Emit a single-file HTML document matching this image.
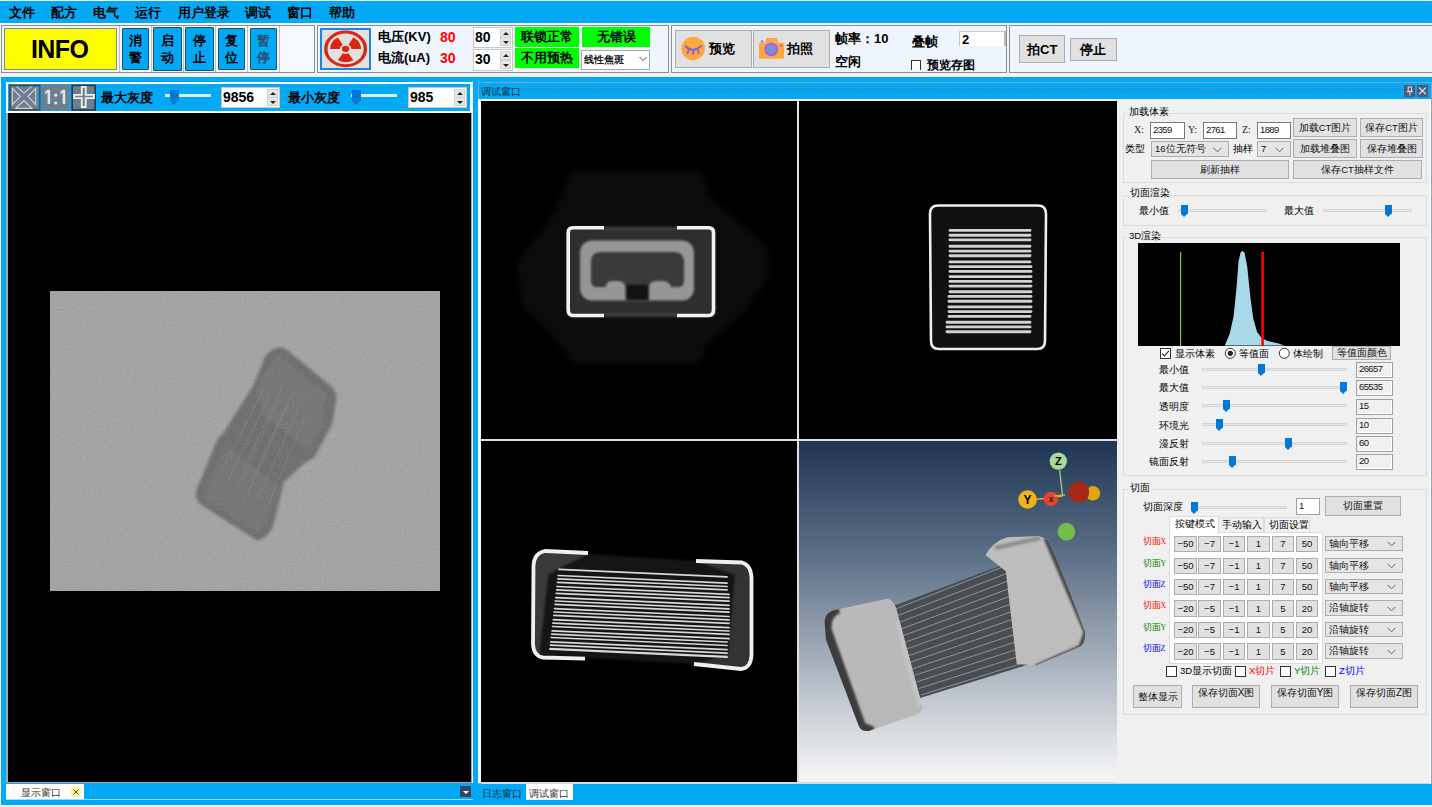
<!DOCTYPE html>
<html><head><meta charset="utf-8">
<style>
*{box-sizing:border-box;margin:0;padding:0}
html,body{width:1432px;height:807px;overflow:hidden;background:#eef5fc;font-family:"Liberation Sans",sans-serif;color:#000}
.a{position:absolute}
.t{position:absolute;white-space:nowrap;line-height:1}
.blue{background:#03a9f4}
.grp{position:absolute;border:1px solid #8c8c8c;background:#eef5fc}
.wbtn{position:absolute;background:#e1e1e1;border:1px solid #adadad}
.mi{position:absolute;top:6px;font-size:13px;font-weight:bold;line-height:14px}
.tb{position:absolute;background:#03a9f4;border:1px solid #1d4f6e;border-radius:1px;font-size:13px;font-weight:bold;display:flex;flex-direction:column;align-items:center;justify-content:center;line-height:17px}
.spin{position:absolute;background:#fff;border:1px solid #c8c8c8}
.spin b{position:absolute;left:1px;top:2px;font-size:14px;line-height:14px}
.spin i{position:absolute;right:1px;width:11px;background:#e6e6e6;border:1px solid #d0d0d0}
.spin i.up{top:1px;height:9px}
.spin i.dn{bottom:1px;height:9px}
.spin i:after{content:"";position:absolute;left:2px;border-left:3px solid transparent;border-right:3px solid transparent}
.spin i.up:after{top:2px;border-bottom:3px solid #222}
.spin i.dn:after{top:3px;border-top:3px solid #222}
.grn{position:absolute;background:#00ff00;font-size:13px;font-weight:bold;line-height:20px;text-align:center}
.sl{position:absolute;height:3px;background:#e6e6e6}
.th{position:absolute;width:9px;height:11px;background:#0078d7}
.th:after{content:"";position:absolute;left:0;top:11px;border-left:4.5px solid transparent;border-right:4.5px solid transparent;border-top:4px solid #0078d7}
.rb{position:absolute;background:#e1e1e1;border:1px solid #adadad;display:flex;justify-content:center;line-height:1;white-space:nowrap;color:#111}
.ri{position:absolute;background:#fff;border:1px solid #7a7a7a;font-size:9.5px;letter-spacing:-0.6px;padding-left:2px;white-space:nowrap;color:#111}
.rc{position:absolute;background:#e5e5e5;border:1px solid #acacac;font-size:9.5px;padding-left:3px;white-space:nowrap;color:#111}
.th2{position:absolute;width:7px;height:9px;background:#0078d7}
.th2:after{content:"";position:absolute;left:0;top:9px;border-left:3.5px solid transparent;border-right:3.5px solid transparent;border-top:3px solid #0078d7}
</style></head><body>
<!-- menu bar -->
<div class="a blue" style="left:0;top:1px;width:1432px;height:22px"></div>
<div class="mi" style="left:9px">文件</div>
<div class="mi" style="left:51px">配方</div>
<div class="mi" style="left:93px">电气</div>
<div class="mi" style="left:135px">运行</div>
<div class="mi" style="left:178px">用户登录</div>
<div class="mi" style="left:245px">调试</div>
<div class="mi" style="left:287px">窗口</div>
<div class="mi" style="left:329px">帮助</div>

<!-- toolbar groups -->
<div class="grp" style="left:1px;top:25px;width:314px;height:48px"></div>
<div class="grp" style="left:317px;top:25px;width:352px;height:48px"></div>
<div class="grp" style="left:671px;top:25px;width:336px;height:48px"></div>
<div class="grp" style="left:1009px;top:25px;width:430px;height:48px"></div>


<!-- group1 content -->
<div class="a" style="left:4px;top:28px;width:113px;height:42px;background:#ffff00;border:1px solid #85859a"></div>
<div class="t" style="left:31px;top:37px;font-size:25px;font-weight:bold;letter-spacing:-0.6px">INFO</div>
<div class="a" style="left:119px;top:26px;width:1px;height:46px;background:#c0c0c0"></div>
<div class="a" style="left:120px;top:26px;width:194px;height:46px;background:#f6f9fc"></div>
<div class="a" style="left:151px;top:26px;width:1px;height:46px;background:#c0c0c0"></div>
<div class="a" style="left:183px;top:26px;width:1px;height:46px;background:#c0c0c0"></div>
<div class="a" style="left:215px;top:26px;width:1px;height:46px;background:#c0c0c0"></div>
<div class="a" style="left:247px;top:26px;width:1px;height:46px;background:#c0c0c0"></div>
<div class="a" style="left:279px;top:26px;width:1px;height:46px;background:#c0c0c0"></div>
<div class="tb" style="left:122px;top:28px;width:27px;height:42px"><span>消</span><span>警</span></div>
<div class="tb" style="left:153px;top:27px;width:29px;height:44px"><span>启</span><span>动</span></div>
<div class="tb" style="left:185px;top:27px;width:29px;height:44px"><span>停</span><span>止</span></div>
<div class="tb" style="left:218px;top:28px;width:27px;height:42px"><span>复</span><span>位</span></div>
<div class="tb" style="left:250px;top:28px;width:27px;height:42px;color:#2a4a6a"><span>暂</span><span>停</span></div>


<!-- group2 content -->
<div class="a" style="left:320px;top:28px;width:51px;height:42px;background:#e1e1e1;border:2px solid #1e84dc"></div>
<svg class="a" style="left:320px;top:28px" width="51" height="42" viewBox="320 28 51 42">
 <g transform="translate(345.6 48.9) scale(1 0.851)">
  <circle r="19.8" fill="none" stroke="#dc2512" stroke-width="3.4"/>
  <circle r="3.6" fill="#dc2512"/>
  <path fill="#dc2512" d="M-15.5 0 A15.5 15.5 0 0 1 -7.75 -13.42 L-2.9 -5.02 A5.8 5.8 0 0 0 -5.8 0 Z"/>
  <path fill="#dc2512" d="M15.5 0 A15.5 15.5 0 0 0 7.75 -13.42 L2.9 -5.02 A5.8 5.8 0 0 1 5.8 0 Z"/>
  <path fill="#dc2512" d="M-7.75 13.42 A15.5 15.5 0 0 0 7.75 13.42 L2.9 5.02 A5.8 5.8 0 0 1 -2.9 5.02 Z"/>
 </g>
</svg>
<div class="t" style="left:378px;top:30px;font-size:13px;font-weight:bold;line-height:14px">电压(KV)</div>
<div class="t" style="left:378px;top:51px;font-size:13px;font-weight:bold;line-height:14px">电流(uA)</div>
<div class="t" style="left:440px;top:30px;font-size:14px;font-weight:bold;color:#ff0000;line-height:14px">80</div>
<div class="t" style="left:440px;top:51px;font-size:14px;font-weight:bold;color:#ff0000;line-height:14px">30</div>
<div class="spin" style="left:473px;top:27px;width:40px;height:21px"><b>80</b><i class="up"></i><i class="dn"></i></div>
<div class="spin" style="left:473px;top:49px;width:40px;height:22px"><b>30</b><i class="up"></i><i class="dn"></i></div>
<div class="grn" style="left:515px;top:27px;width:64px;height:20px">联锁正常</div>
<div class="grn" style="left:582px;top:27px;width:68px;height:20px">无错误</div>
<div class="grn" style="left:515px;top:48px;width:64px;height:20px">不用预热</div>
<div class="a" style="left:581px;top:50px;width:69px;height:20px;background:#fff;border:1px solid #a8a8a8"></div>
<div class="t" style="left:584px;top:54px;font-size:10px;font-weight:bold;line-height:11px;color:#222">线性焦斑</div>
<svg class="a" style="left:638px;top:55px" width="10" height="8"><path d="M1.5 2 L5 5.5 L8.5 2" fill="none" stroke="#555" stroke-width="1"/></svg>

<!-- group3 content -->
<div class="wbtn" style="left:675px;top:30px;width:77px;height:38px"></div>
<svg class="a" style="left:680px;top:36px" width="26" height="26" viewBox="680 36 26 26">
 <circle cx="693.2" cy="48.5" r="11.8" fill="#ffa63f"/>
 <path d="M685.5 46.3 Q693.2 53.5 701.2 46.1" fill="none" stroke="#7b68d0" stroke-width="2" stroke-linecap="round"/>
 <path d="M688.6 50.2 L687.6 53 M693.2 50.8 L693.2 54.2 M697.8 50.2 L698.8 53" stroke="#7b68d0" stroke-width="1.8" stroke-linecap="round"/>
</svg>
<div class="t" style="left:709px;top:42px;font-size:13px;font-weight:bold;line-height:14px">预览</div>
<div class="wbtn" style="left:753px;top:30px;width:77px;height:38px"></div>
<svg class="a" style="left:756px;top:36px" width="30" height="26" viewBox="756 36 30 26">
 <path d="M765.1 42.7 L766.3 38.1 L777 38.1 L778.2 42.7 Z" fill="#ffa63f"/>
 <rect x="759" y="42.7" width="25" height="16" rx="1.2" fill="#ffa63f"/>
 <circle cx="771.2" cy="49.4" r="7" fill="#9a6ae0"/>
 <circle cx="771.2" cy="49.4" r="4.8" fill="#7e8ed0"/>
 <circle cx="762.1" cy="41.5" r="1.2" fill="#9a6ae0"/>
 <circle cx="780.9" cy="45.7" r="1.2" fill="#9a6ae0"/>
</svg>
<div class="t" style="left:787px;top:42px;font-size:13px;font-weight:bold;line-height:14px">拍照</div>
<div class="t" style="left:835px;top:32px;font-size:13px;font-weight:bold;line-height:14px">帧率：10</div>
<div class="t" style="left:835px;top:55px;font-size:13px;font-weight:bold;line-height:14px">空闲</div>
<div class="t" style="left:912px;top:35px;font-size:13px;font-weight:bold;line-height:14px">叠帧</div>
<div class="a" style="left:959px;top:31px;width:47px;height:15px;background:#fff;border-top:1px solid #c8c8c8;border-left:1px solid #c8c8c8"></div>
<div class="a" style="left:1004px;top:31px;width:2px;height:15px;background:#b8b8b8"></div>
<div class="t" style="left:962px;top:33px;font-size:13px;font-weight:bold;line-height:14px">2</div>
<div class="a" style="left:911px;top:60px;width:10px;height:10px;background:#fff;border:1px solid #333;border-bottom:none"></div>
<div class="t" style="left:927px;top:59px;font-size:12px;font-weight:bold;line-height:13px">预览存图</div>

<!-- group4 content -->
<div class="wbtn" style="left:1019px;top:35px;width:46px;height:28px"></div>
<div class="t" style="left:1027px;top:43px;font-size:13px;font-weight:bold;line-height:14px">拍CT</div>
<div class="wbtn" style="left:1070px;top:38px;width:47px;height:23px"></div>
<div class="t" style="left:1080px;top:43px;font-size:13px;font-weight:bold;line-height:14px">停止</div>

<!-- main blue area -->
<div class="a blue" style="left:1px;top:77px;width:1431px;height:728px"></div>

<!-- left panel frame -->
<div class="a" style="left:6px;top:82px;width:467px;height:701px;background:#fff"></div>
<div class="a blue" style="left:8px;top:84px;width:462px;height:27px"></div>
<div class="a" style="left:6px;top:113px;width:466px;height:670px;background:#a8a8a8"></div>
<div class="a" style="left:8px;top:113px;width:463px;height:669px;background:#000"></div>


<!-- left toolbar -->
<svg class="a" style="left:8px;top:83px" width="90" height="29" viewBox="8 83 90 29">
 <rect x="10.1" y="85.5" width="29.8" height="24.3" fill="#6c7e8f" stroke="#4e4a48" stroke-width="1.8"/>
 <rect x="37.8" y="86.4" width="1.3" height="22.6" fill="#1ea0e0"/>
 <path d="M12.3 88.4 L20.4 96.6 L12.3 104.7 Z M35.7 88.4 L28 96.6 L35.7 104.7 Z M16.6 86.4 L24 93.1 L31.5 86.4 M15.7 108.4 L24 100.6 L31.9 108.4 Z" fill="none" stroke="#cfd8e0" stroke-width="1.1"/>
 <rect x="40.8" y="84.6" width="30.4" height="25.6" fill="#6c7e8f"/>
 <rect x="40.8" y="84.6" width="1.4" height="25.6" fill="#1ea0e0"/>
 <rect x="69" y="84.6" width="2.2" height="25.6" fill="#1ea0e0"/>
 <rect x="72.2" y="85.4" width="23" height="24.6" fill="#6c7e8f" stroke="#1d3a52" stroke-width="1.6"/>
 <path d="M81.8 86.9 H85.7 V94.8 H94 V98.1 H85.7 V107 H81.8 V98.1 H74.1 V94.8 H81.8 Z" fill="none" stroke="#f0f0e8" stroke-width="1.8"/>
</svg>
<svg class="a" style="left:40px;top:85px" width="30" height="25" viewBox="40 85 30 25"><g fill="#e2e6ea">
 <path d="M47.6 89.7 H50.1 V104.1 H47.6 V92.6 L45.2 94.3 V91.8 Z"/><circle cx="55.8" cy="95.2" r="1.6"/><circle cx="55.8" cy="103" r="1.6"/>
 <path d="M62.7 89.7 H65.2 V104.1 H62.7 V92.6 L60.3 94.3 V91.8 Z"/></g></svg>
<div class="t" style="left:101px;top:91px;font-size:13px;font-weight:bold;line-height:14px">最大灰度</div>
<div class="sl" style="left:165px;top:94px;width:46px"></div><div class="th" style="left:170px;top:90px"></div>
<div class="spin" style="left:221px;top:87px;width:59px;height:21px"><b style="top:2px">9856</b><i class="up"></i><i class="dn"></i></div>
<div class="t" style="left:288px;top:91px;font-size:13px;font-weight:bold;line-height:14px">最小灰度</div>
<div class="sl" style="left:351px;top:94px;width:46px"></div><div class="th" style="left:352px;top:90px"></div>
<div class="spin" style="left:408px;top:87px;width:59px;height:21px"><b style="top:2px">985</b><i class="up"></i><i class="dn"></i></div>

<!-- left bottom tab strip -->
<div class="a" style="left:6px;top:784px;width:78px;height:16px;background:#fff"></div>
<div class="t" style="left:21px;top:787px;font-size:10px;line-height:11px;color:#333">显示窗口</div>
<div class="a" style="left:71px;top:787px;width:10px;height:10px;background:#fdeea0"></div>
<svg class="a" style="left:71px;top:787px" width="10" height="10"><path d="M2.5 2.5 L7.5 7.5 M7.5 2.5 L2.5 7.5" stroke="#555" stroke-width="1"/></svg>
<div class="a" style="left:6px;top:799px;width:467px;height:1px;background:#9fd8f8"></div>
<div class="a" style="left:460px;top:786px;width:11px;height:11px;background:#374563"></div>
<div class="a" style="left:463px;top:791px;width:0;height:0;border-left:3px solid transparent;border-right:3px solid transparent;border-top:3px solid #fff"></div>

<!-- left image -->

<!-- right window frame -->
<div class="a" style="left:478px;top:82px;width:954px;height:702px;background:#86a2c2"></div>
<div class="a blue" style="left:479px;top:83px;width:952px;height:16px"></div>
<div class="t" style="left:481px;top:86px;font-size:10px;line-height:11px;color:#102a3a">调试窗口</div>
<svg class="a" style="left:520px;top:87px" width="882" height="8" viewBox="520 87 882 8">
 <defs><pattern id="dots" x="521.5" y="88.5" width="3.07" height="3.1" patternUnits="userSpaceOnUse">
  <rect x="0" y="0" width="1.2" height="1.2" fill="#4a7090"/>
  <rect x="1.5" y="1.5" width="1" height="1" fill="#3d8ab8" opacity="0.6"/>
 </pattern></defs>
 <rect x="521.5" y="88.5" width="880" height="4.7" fill="url(#dots)"/>
</svg>
<div class="a" style="left:1404px;top:85px;width:11px;height:12px;background:#4b5a7d"></div>
<div class="a" style="left:1417px;top:85px;width:11px;height:12px;background:#4b5a7d"></div>
<svg class="a" style="left:1404px;top:85px" width="24" height="12" viewBox="1404 85 24 12">
 <path d="M1408.2 87 H1411.6 V91.2 H1408.2 Z M1407 91.6 H1412.8 M1409.9 91.6 V95.8" fill="none" stroke="#d4dbe4" stroke-width="1.1"/>
 <path d="M1419 87.5 L1426 94.3 M1426 87.5 L1419 94.3" stroke="#d4dbe4" stroke-width="1.3"/>
</svg>
<div class="a" style="left:478px;top:99px;width:640px;height:684px;background:#fff"></div>
<div class="a" style="left:481px;top:101px;width:636px;height:681px;background:#e0e0e0"></div>
<div class="a" style="left:481px;top:101px;width:316px;height:338px;background:#000"></div>
<div class="a" style="left:799px;top:101px;width:318px;height:338px;background:#000"></div>
<div class="a" style="left:481px;top:441px;width:316px;height:341px;background:#000"></div>
<div class="a" style="left:799px;top:441px;width:318px;height:341px;background:linear-gradient(#1e3550,#6f8496 45%,#c9d1d9 80%,#f8f9fa)"></div>
<div class="a" style="left:1117px;top:99px;width:313px;height:685px;background:#f0f0f0"></div>
<div class="a" style="left:481px;top:782px;width:636px;height:2px;background:#dadada"></div>


<!-- IMGS START -->
<svg class="a" style="left:1138px;top:243px" width="262" height="103" viewBox="1138 243 262 103">
<rect x="1138" y="243" width="262" height="103" fill="#000"/>
<path d="M1224.8 345.5 L1229.7 333.8 L1233.6 316.2 L1236.6 286.9 L1238.5 261.5 L1240.5 252.7 L1242.4 250.7 L1244.6 252.8 L1247.3 267.3 L1250.3 296.7 L1253.2 318.2 L1257.1 331.9 L1261.4 337.7 L1266.9 340.7 L1278.6 343.6 L1284.5 345.5 Z" fill="#a9d8e8"/>
<rect x="1180" y="252" width="1.2" height="94" fill="#8cc43c"/>
<rect x="1261.3" y="252" width="2.6" height="94" fill="#ff0000"/>
</svg>
<svg class="a" style="left:50px;top:291px" width="390" height="300" viewBox="50 291 390 300">
<defs>
<filter id="nz" color-interpolation-filters="sRGB" x="0" y="0" width="100%" height="100%"><feTurbulence type="fractalNoise" baseFrequency="0.55" numOctaves="2" seed="3"/><feColorMatrix type="matrix" values="0.33 0.33 0.33 0 0  0.33 0.33 0.33 0 0  0.33 0.33 0.33 0 0  0 0 0 0 1"/></filter>
<filter id="bl" color-interpolation-filters="sRGB" x="-20%" y="-20%" width="140%" height="140%"><feGaussianBlur stdDeviation="1.5"/></filter>
<filter id="bl2" color-interpolation-filters="sRGB"><feGaussianBlur stdDeviation="0.7"/></filter>
</defs>
<rect x="50" y="291" width="390" height="300" fill="#aaaaaa"/>
<g filter="url(#bl)">
<path d="M277 348 Q282 346 287 350 L331 386 Q338 392 336 402 L332 424 L314 458 L306 462 L284 482 L274 523 Q270 536 258 541 L203 506 Q194 500 196 491 L218 438 L224 432 L253 386 L265 357 Q269 350 277 348 Z" fill="#6f6f6f"/>
<path d="M279 357 L326 393 L323 424 L309 450 L262 414 L256 392 L268 366 Z" fill="#777"/>
<path d="M226 446 L279 486 L266 524 L255 533 L206 501 L205 490 Z" fill="#767676"/>
</g>
<g filter="url(#bl2)" stroke="#8e8e8e" stroke-width="0.9" opacity="0.6" fill="none">
<path d="M270 395 L228 480 M279 400 L238 487 M288 405 L248 493 M297 411 L258 499 M305 417 L268 505 M262 392 L222 470 M292 394 L252 480 M283 385 L243 470"/>
</g>
<rect x="50" y="291" width="390" height="300" filter="url(#nz)" opacity="0.13"/>
</svg>
<svg class="a" style="left:481px;top:101px" width="316" height="338" viewBox="481 101 316 338">
<defs><filter id="b1" color-interpolation-filters="sRGB"><feGaussianBlur stdDeviation="1"/></filter><filter id="b3" color-interpolation-filters="sRGB" x="-20%" y="-20%" width="140%" height="140%"><feGaussianBlur stdDeviation="2.5"/></filter><filter id="b04" color-interpolation-filters="sRGB"><feGaussianBlur stdDeviation="0.45"/></filter>
<filter id="b05" color-interpolation-filters="sRGB"><feGaussianBlur stdDeviation="0.6"/></filter></defs>
<rect x="481" y="101" width="316" height="338" fill="#000"/>
<path d="M571 170 L700 170 L712 200 L766 245 L770 275 L745 312 L707 345 L700 363 L571 363 L560 345 L522 305 L517 262 L548 222 L560 200 Z" fill="#0b0b0b" filter="url(#b3)"/>
<g filter="url(#b1)">
<rect x="567" y="226.5" width="149" height="91" rx="5" fill="#2e2e2e"/>
<rect x="580" y="240.5" width="114" height="60" rx="12" fill="#969696"/>
<path d="M591 262 Q591 252 601 252 L674 252 Q684 252 684 262 L684 281 Q684 287 678 287 L671 287 Q670 281 662 281 L656 281 Q649 281 649 288 L649 300 L625.5 300 L625.5 288 Q625 281 618 281 L612 281 Q606 281 606 287 L597 287 Q591 287 591 281 Z" fill="#3a3a3a"/>
<rect x="626.5" y="285" width="22" height="15" fill="#121212"/>
<path d="M604 229 L677 229 M604 314.5 L677 314.5" stroke="#404040" stroke-width="2.5"/>
</g>
<g filter="url(#b05)" fill="none" stroke="#f2f2f2" stroke-width="3.6">
<path d="M604 227.8 L573 227.8 Q568.2 227.8 568.2 233 L568.2 310 Q568.2 315.5 573 315.5 L604 315.5"/>
<path d="M677 227.8 L708.5 227.8 Q713.5 227.8 713.5 233 L713.5 310 Q713.5 315.5 708.5 315.5 L677 315.5"/>
</g>
</svg>
<svg class="a" style="left:799px;top:101px" width="318" height="338" viewBox="799 101 318 338">
<rect x="799" y="101" width="318" height="338" fill="#000"/>
<g filter="url(#b1)">
<path d="M938 205.5 L1038 205.5 Q1046 205.5 1046 214 L1045 341 Q1045 349 1037 349 L939 349 Q931 349 931 341 L930 214 Q930 205.5 938 205.5 Z" fill="#101010"/>
</g>
<path d="M950 230.4 L1030 230.4 M950 235.2 L1030 235.2 M950 239.9 L1030 239.9 M950 246.3 L1030 246.3 M950 251.1 L1030 251.1 M950 255.8 L1030 255.8 M950 261.9 L1030 261.9 M950 266.6 L1031 266.6 M950 271.4 L1031 271.4 M950 276.6 L1031 276.6 M950 281.4 L1031 281.4 M950 286.1 L1031 286.1 M950 291.7 L1031 291.7 M949 296.4 L1031 296.4 M949 301.2 L1031 301.2 M949 306.9 L1031 306.9 M949 311.6 L1031 311.6 M949 316.4 L1030 316.4 M947 322.2 L1030 322.2 M947 326.9 L1030 326.9 M947 331.7 L1030 331.7" stroke="#d2d2d2" stroke-width="2.9" stroke-linecap="round" filter="url(#b04)"/>
<path d="M938 205.5 L1038 205.5 Q1046 205.5 1046 214 L1045 341 Q1045 349 1037 349 L939 349 Q931 349 931 341 L930 214 Q930 205.5 938 205.5 Z" fill="none" stroke="#eeeeee" stroke-width="2.6" filter="url(#b05)"/>
</svg>
<svg class="a" style="left:481px;top:441px" width="316" height="341" viewBox="481 441 316 341">
<rect x="481" y="441" width="316" height="341" fill="#000"/>
<g filter="url(#b1)">
<path d="M543 552 L589 554 L700 561 L744 563 Q751 566 751 578 L751 655 Q750 668 741 669 L694 664 L585 658 L541 657 Q533 654 533 643 L533 566 Q534 552 543 552 Z" fill="#151515"/>
<path d="M543 552 L589 554 L560 568 L548 575 L540 650 L541 657 Q533 654 533 643 L533 566 Q534 552 543 552 Z" fill="#3a3a3a"/>
<path d="M696 561 L744 563 Q751 566 751 578 L751 655 Q750 668 741 669 L694 664 L728 655 L735 575 Z" fill="#333"/>
</g>
<path d="M559.0 569.3 L727 576.9 M558.3 575.5 L727 583.1 M557.9 578.9 L727 586.5 M557.5 582.3 L727 589.9 M557.1 586.5 L729 594.3 M556.7 589.9 L729 597.7 M556.3 593.3 L729 601.1 M555.8 597.6 L729 605.4 M555.4 601.0 L729 608.8 M555.1 604.4 L729 612.2 M554.6 608.6 L729 616.5 M554.2 612.0 L729 619.9 M553.8 615.4 L729 623.3 M553.3 619.7 L729 627.6 M552.9 623.1 L729 631.0 M552.6 626.5 L729 634.4 M552.1 630.8 L729 638.7 M551.7 634.1 L727 642.0 M551.3 637.5 L727 645.5 M550.8 641.8 L727 649.7 M550.5 645.2 L727 653.1 M550.1 648.6 L727 656.6 M550.0 649.2 L727 657.2" stroke="#d8d8d8" stroke-width="1.75" stroke-linecap="round" filter="url(#b04)"/>
<g filter="url(#b05)" fill="none" stroke="#f0f0f0" stroke-width="3.8">
<path d="M588 553 L545 551 Q534 553 533.5 566 L533 644 Q533.5 656 543 657.5 L585 658.7"/>
<path d="M696 561 L742 562.5 Q751 565 751.5 578 L751.5 655 Q751 668 741 669 L694 664"/>
</g>
</svg>
<svg class="a" style="left:799px;top:441px" width="318" height="341" viewBox="799 441 318 341">
<defs>
<linearGradient id="bg3d" x1="0" y1="0" x2="0" y2="1"><stop offset="0" stop-color="#1e3552"/><stop offset="0.33" stop-color="#5b6f86"/><stop offset="0.6" stop-color="#9ba7b4"/><stop offset="0.85" stop-color="#d7dbe0"/><stop offset="1" stop-color="#f5f6f7"/></linearGradient>
<linearGradient id="capL" x1="0" y1="0" x2="1" y2="0.2"><stop offset="0" stop-color="#2e2e2e"/><stop offset="0.14" stop-color="#505050"/><stop offset="0.3" stop-color="#a8a8a8"/><stop offset="0.6" stop-color="#c0c0c0"/><stop offset="1" stop-color="#bababa"/></linearGradient>
<linearGradient id="capR" x1="0" y1="0" x2="1" y2="0.3"><stop offset="0" stop-color="#b8b8b8"/><stop offset="0.4" stop-color="#c4c4c4"/><stop offset="0.88" stop-color="#b4b4b4"/><stop offset="1" stop-color="#3a3a3a"/></linearGradient>
</defs>
<rect x="799" y="441" width="318" height="341" fill="url(#bg3d)"/>
<path d="M891.3 606.8 L1007.2 563.2 L1038.6 661.3 L920 698.1 Z" fill="#4a4c50"/>
<path d="M893.0 610.0 L1005.0 566.0 M895.2 616.5 L1007.4 573.2 M897.3 623.1 L1009.8 580.3 M899.5 629.6 L1012.2 587.5 M901.6 636.2 L1014.5 594.6 M903.8 642.7 L1016.9 601.8 M905.9 649.2 L1019.3 608.9 M908.1 655.8 L1021.7 616.1 M910.2 662.3 L1024.1 623.2 M912.4 668.8 L1026.5 630.4 M914.5 675.4 L1028.8 637.5 M916.7 681.9 L1031.2 644.7 M918.8 688.5 L1033.6 651.8 M921.0 695.0 L1036.0 659.0" stroke="#9aa8b8" stroke-width="1" opacity="0.8"/>
<clipPath id="cpL"><path d="M824.5 620.4 Q826 611 836.8 609.5 L888.6 598.6 Q896 603 898 615 L922.7 707.7 Q921 714 913.1 715.8 L869.5 730.8 Q861 732 858.6 725.4 L825.9 639.5 Z"/></clipPath><clipPath id="cpR"><path d="M985.4 555 Q994 541 1007.2 537.3 L1038.6 535.9 Q1048 538 1052.2 546.8 L1084.9 631.3 Q1086 642 1080.8 646.3 L1035.8 665.4 L1016.7 664 L1005.8 571.3 Z"/></clipPath>
<path d="M824.5 620.4 Q826 611 836.8 609.5 L888.6 598.6 Q896 603 898 615 L922.7 707.7 Q921 714 913.1 715.8 L869.5 730.8 Q861 732 858.6 725.4 L825.9 639.5 Z" fill="#b9b9b9"/>
<g clip-path="url(#cpL)" filter="url(#b1)"><path d="M838 607 Q824 612 825 630 L860 728 L872 733" fill="none" stroke="#3c3c3c" stroke-width="13"/><path d="M900 620 L922 705" stroke="#d0d0d0" stroke-width="10" opacity="0.5"/></g>
<path d="M985.4 555 Q994 541 1007.2 537.3 L1038.6 535.9 Q1048 538 1052.2 546.8 L1084.9 631.3 Q1086 642 1080.8 646.3 L1035.8 665.4 L1016.7 664 L1005.8 571.3 Z" fill="#bdbdbd"/>
<g clip-path="url(#cpR)" filter="url(#b1)"><path d="M1046 538 L1086 632 L1081 647 L1036 667" fill="none" stroke="#4a4a4a" stroke-width="5"/><path d="M995 548 L1040 538" stroke="#8a8a8a" stroke-width="4"/></g>
<path d="M1059.6 470 L1062.6 496" stroke="#98d080" stroke-width="1.3"/>
<path d="M1062.6 496 L1036 499.5" stroke="#f0a820" stroke-width="1.4"/>
<circle cx="1093" cy="493.3" r="7.2" fill="#e0a810"/>
<circle cx="1078.8" cy="492.1" r="10.5" fill="#a82818"/>
<circle cx="1066.4" cy="531.7" r="8.9" fill="#74bc4c"/>
<circle cx="1058.3" cy="461.1" r="8.7" fill="#a9d89b"/>
<circle cx="1027.6" cy="499.5" r="9.3" fill="#f0b418"/>
<circle cx="1050.9" cy="498.9" r="7.2" fill="#e54530"/>
<path d="M1054.5 496 L1065 495" stroke="#f0a820" stroke-width="1.4"/>
<text x="1058.3" y="465.3" font-size="11" font-weight="bold" text-anchor="middle" font-family="Liberation Sans" fill="#000">Z</text>
<text x="1027.6" y="503.6" font-size="12" font-weight="bold" text-anchor="middle" font-family="Liberation Sans" fill="#000">Y</text>
<text x="1050.9" y="502.3" font-size="9" font-weight="bold" text-anchor="middle" font-family="Liberation Sans" fill="#222">x</text>
</svg>
<!-- IMGS END -->
<!-- RIGHT PANEL START -->
<div class="a" style="left:1123px;top:113px;width:304px;height:70px;border:1px solid #dcdcdc"></div>
<div class="a" style="left:1127px;top:112px;width:41px;height:2px;background:#f0f0f0"></div>
<div class="t" style="left:1129px;top:107px;font-size:9.5px;">加载体素</div>
<div class="t" style="left:1134px;top:125px;font-size:9.5px;font-family:'Liberation Serif',serif;font-size:10px;color:#222">X:</div>
<div class="ri" style="left:1150px;top:122px;width:35px;height:17px;line-height:10px;padding-top:2px;">2359</div>
<div class="t" style="left:1188px;top:125px;font-size:9.5px;font-family:'Liberation Serif',serif;font-size:10px;color:#222">Y:</div>
<div class="ri" style="left:1203px;top:122px;width:34px;height:17px;line-height:10px;padding-top:2px;">2761</div>
<div class="t" style="left:1242px;top:125px;font-size:9.5px;font-family:'Liberation Serif',serif;font-size:10px;color:#222">Z:</div>
<div class="ri" style="left:1257px;top:122px;width:34px;height:17px;line-height:10px;padding-top:2px;">1889</div>
<div class="rb" style="left:1293px;top:118px;width:64px;height:19px;font-size:9.5px;align-items:center;">加载CT图片</div>
<div class="rb" style="left:1360px;top:118px;width:63px;height:19px;font-size:9.5px;align-items:center;">保存CT图片</div>
<div class="t" style="left:1125px;top:144px;font-size:10px;">类型</div>
<div class="rc" style="left:1151px;top:141px;width:78px;height:16px;line-height:14px;">16位无符号<svg width="9" height="6" style="position:absolute;right:6px;top:4.5px"><path d="M0.5 0.8 L4.5 4.8 L8.5 0.8" fill="none" stroke="#606060" stroke-width="1"/></svg></div>
<div class="t" style="left:1233px;top:144px;font-size:10px;">抽样</div>
<div class="rc" style="left:1257px;top:141px;width:34px;height:16px;line-height:14px;">7<svg width="9" height="6" style="position:absolute;right:6px;top:4.5px"><path d="M0.5 0.8 L4.5 4.8 L8.5 0.8" fill="none" stroke="#606060" stroke-width="1"/></svg></div>
<div class="rb" style="left:1293px;top:139px;width:64px;height:19px;font-size:9.5px;align-items:center;">加载堆叠图</div>
<div class="rb" style="left:1360px;top:139px;width:63px;height:19px;font-size:9.5px;align-items:center;">保存堆叠图</div>
<div class="rb" style="left:1151px;top:160px;width:138px;height:19px;font-size:9.5px;align-items:center;">刷新抽样</div>
<div class="rb" style="left:1293px;top:160px;width:129px;height:19px;font-size:9.5px;align-items:center;">保存CT抽样文件</div>
<div class="a" style="left:1123px;top:195px;width:304px;height:31px;border:1px solid #dcdcdc"></div>
<div class="a" style="left:1128px;top:194px;width:41px;height:2px;background:#f0f0f0"></div>
<div class="t" style="left:1130px;top:188px;font-size:9.5px;">切面渲染</div>
<div class="t" style="left:1139px;top:206px;font-size:9.5px;">最小值</div>
<div class="a" style="left:1178px;top:209.0px;width:89px;height:3.0px;background:#e6e6e6;border:1px solid #d6d6d6"></div>
<div class="th2" style="left:1181px;top:205.0px"></div>
<div class="t" style="left:1284px;top:206px;font-size:9.5px;">最大值</div>
<div class="a" style="left:1323px;top:209.0px;width:89px;height:3.0px;background:#e6e6e6;border:1px solid #d6d6d6"></div>
<div class="th2" style="left:1385px;top:205.0px"></div>
<div class="a" style="left:1123px;top:237px;width:304px;height:239px;border:1px solid #dcdcdc"></div>
<div class="a" style="left:1127px;top:236px;width:32px;height:2px;background:#f0f0f0"></div>
<div class="t" style="left:1129px;top:231px;font-size:9.5px;">3D渲染</div>
<div class="a" style="left:1160px;top:348px;width:11px;height:11px;background:#fff;border:1px solid #333"></div>
<svg class="a" style="left:1160px;top:348px" width="11" height="11"><path d="M2.2 5.6 L4.5 8 L8.8 2.8" fill="none" stroke="#222" stroke-width="1.1"/></svg>
<div class="t" style="left:1175px;top:349px;font-size:9.5px;">显示体素</div>
<svg class="a" style="left:1224px;top:347px" width="70" height="13"><circle cx="6.3" cy="6.3" r="5" fill="#fff" stroke="#333" stroke-width="1"/><circle cx="6.3" cy="6.3" r="2.6" fill="#222"/><circle cx="60.3" cy="6.3" r="5" fill="#fff" stroke="#333" stroke-width="1"/></svg>
<div class="t" style="left:1239px;top:349px;font-size:9.5px;">等值面</div>
<div class="t" style="left:1293px;top:349px;font-size:9.5px;">体绘制</div>
<div class="rb" style="left:1332px;top:346px;width:59px;height:14px;font-size:9.5px;align-items:center;">等值面颜色</div>
<div class="t" style="left:1100px;width:89px;text-align:right;top:365.3px;font-size:9.5px">最小值</div>
<div class="a" style="left:1202px;top:367.8px;width:145px;height:3.0px;background:#e6e6e6;border:1px solid #d6d6d6"></div>
<div class="th2" style="left:1258px;top:363.8px"></div>
<div class="ri" style="left:1356px;top:362px;width:37px;height:16px;line-height:10px;padding-top:2px;border-color:#a0a0a0;background:#f0f0f0;box-shadow:inset -1px -1px #fff;padding-top:1px">26657</div>
<div class="t" style="left:1100px;width:89px;text-align:right;top:383.2px;font-size:9.5px">最大值</div>
<div class="a" style="left:1202px;top:385.7px;width:145px;height:3.0px;background:#e6e6e6;border:1px solid #d6d6d6"></div>
<div class="th2" style="left:1340px;top:381.7px"></div>
<div class="ri" style="left:1356px;top:380px;width:37px;height:16px;line-height:10px;padding-top:2px;border-color:#a0a0a0;background:#f0f0f0;box-shadow:inset -1px -1px #fff;padding-top:1px">65535</div>
<div class="t" style="left:1100px;width:89px;text-align:right;top:401.8px;font-size:9.5px">透明度</div>
<div class="a" style="left:1202px;top:404.3px;width:145px;height:3.0px;background:#e6e6e6;border:1px solid #d6d6d6"></div>
<div class="th2" style="left:1223px;top:400.3px"></div>
<div class="ri" style="left:1356px;top:399px;width:37px;height:16px;line-height:10px;padding-top:2px;border-color:#a0a0a0;background:#f0f0f0;box-shadow:inset -1px -1px #fff;padding-top:1px">15</div>
<div class="t" style="left:1100px;width:89px;text-align:right;top:420.8px;font-size:9.5px">环境光</div>
<div class="a" style="left:1202px;top:423.3px;width:145px;height:3.0px;background:#e6e6e6;border:1px solid #d6d6d6"></div>
<div class="th2" style="left:1216px;top:419.3px"></div>
<div class="ri" style="left:1356px;top:418px;width:37px;height:16px;line-height:10px;padding-top:2px;border-color:#a0a0a0;background:#f0f0f0;box-shadow:inset -1px -1px #fff;padding-top:1px">10</div>
<div class="t" style="left:1100px;width:89px;text-align:right;top:439px;font-size:9.5px">漫反射</div>
<div class="a" style="left:1202px;top:441.5px;width:145px;height:3.0px;background:#e6e6e6;border:1px solid #d6d6d6"></div>
<div class="th2" style="left:1285px;top:437.5px"></div>
<div class="ri" style="left:1356px;top:436px;width:37px;height:16px;line-height:10px;padding-top:2px;border-color:#a0a0a0;background:#f0f0f0;box-shadow:inset -1px -1px #fff;padding-top:1px">60</div>
<div class="t" style="left:1100px;width:89px;text-align:right;top:457.2px;font-size:9.5px">镜面反射</div>
<div class="a" style="left:1202px;top:459.7px;width:145px;height:3.0px;background:#e6e6e6;border:1px solid #d6d6d6"></div>
<div class="th2" style="left:1229px;top:455.7px"></div>
<div class="ri" style="left:1356px;top:454px;width:37px;height:16px;line-height:10px;padding-top:2px;border-color:#a0a0a0;background:#f0f0f0;box-shadow:inset -1px -1px #fff;padding-top:1px">20</div>
<div class="a" style="left:1123px;top:489px;width:304px;height:226px;border:1px solid #dcdcdc"></div>
<div class="a" style="left:1128px;top:488px;width:22px;height:2px;background:#f0f0f0"></div>
<div class="t" style="left:1130px;top:483px;font-size:9.5px;">切面</div>
<div class="t" style="left:1143px;top:502px;font-size:9.5px;">切面深度</div>
<div class="a" style="left:1191px;top:505.5px;width:96px;height:3.0px;background:#e6e6e6;border:1px solid #d6d6d6"></div>
<div class="th2" style="left:1191px;top:501.5px"></div>
<div class="ri" style="left:1296px;top:498px;width:24px;height:17px;line-height:10px;padding-top:2px;border-color:#a0a0a0">1</div>
<div class="rb" style="left:1325px;top:496px;width:76px;height:20px;font-size:9.5px;align-items:center;">切面重置</div>
<div class="a" style="left:1218px;top:517px;width:46px;height:16px;background:#f0f0f0;border:1px solid #dcdcdc;border-bottom:none"></div>
<div class="a" style="left:1264px;top:517px;width:46px;height:16px;background:#f0f0f0;border:1px solid #dcdcdc;border-bottom:none"></div>
<div class="a" style="left:1169px;top:532px;width:154px;height:132px;background:#fff;border:1px solid #dcdcdc"></div>
<div class="a" style="left:1169px;top:516px;width:50px;height:18px;background:#fff;border:1px solid #dcdcdc;border-bottom:none"></div>
<div class="t" style="left:1175px;top:519px;font-size:9.5px;">按键模式</div>
<div class="t" style="left:1222px;top:520px;font-size:9.5px;">手动输入</div>
<div class="t" style="left:1269px;top:520px;font-size:9.5px;">切面设置</div>
<div class="rb" style="left:1174px;top:536px;width:23px;height:16px;font-size:9.5px;align-items:center;">−50</div>
<div class="rb" style="left:1198px;top:536px;width:23px;height:16px;font-size:9.5px;align-items:center;">−7</div>
<div class="rb" style="left:1223px;top:536px;width:22px;height:16px;font-size:9.5px;align-items:center;">−1</div>
<div class="rb" style="left:1247px;top:536px;width:23px;height:16px;font-size:9.5px;align-items:center;">1</div>
<div class="rb" style="left:1272px;top:536px;width:22px;height:16px;font-size:9.5px;align-items:center;">7</div>
<div class="rb" style="left:1296px;top:536px;width:22px;height:16px;font-size:9.5px;align-items:center;">50</div>
<div class="rc" style="left:1325px;top:536px;width:78px;height:15px;line-height:13px;">轴向平移<svg width="9" height="6" style="position:absolute;right:6px;top:4.0px"><path d="M0.5 0.8 L4.5 4.8 L8.5 0.8" fill="none" stroke="#606060" stroke-width="1"/></svg></div>
<div class="t" style="left:1143px;top:537px;font-size:9.2px;color:#ff0000;letter-spacing:-0.3px">切面<span style="font-family:Liberation Serif;font-size:8px">X</span></div>
<div class="rb" style="left:1174px;top:558px;width:23px;height:16px;font-size:9.5px;align-items:center;">−50</div>
<div class="rb" style="left:1198px;top:558px;width:23px;height:16px;font-size:9.5px;align-items:center;">−7</div>
<div class="rb" style="left:1223px;top:558px;width:22px;height:16px;font-size:9.5px;align-items:center;">−1</div>
<div class="rb" style="left:1247px;top:558px;width:23px;height:16px;font-size:9.5px;align-items:center;">1</div>
<div class="rb" style="left:1272px;top:558px;width:22px;height:16px;font-size:9.5px;align-items:center;">7</div>
<div class="rb" style="left:1296px;top:558px;width:22px;height:16px;font-size:9.5px;align-items:center;">50</div>
<div class="rc" style="left:1325px;top:558px;width:78px;height:15px;line-height:13px;">轴向平移<svg width="9" height="6" style="position:absolute;right:6px;top:4.0px"><path d="M0.5 0.8 L4.5 4.8 L8.5 0.8" fill="none" stroke="#606060" stroke-width="1"/></svg></div>
<div class="t" style="left:1143px;top:559px;font-size:9.2px;color:#008000;letter-spacing:-0.3px">切面<span style="font-family:Liberation Serif;font-size:8px">Y</span></div>
<div class="rb" style="left:1174px;top:579px;width:23px;height:16px;font-size:9.5px;align-items:center;">−50</div>
<div class="rb" style="left:1198px;top:579px;width:23px;height:16px;font-size:9.5px;align-items:center;">−7</div>
<div class="rb" style="left:1223px;top:579px;width:22px;height:16px;font-size:9.5px;align-items:center;">−1</div>
<div class="rb" style="left:1247px;top:579px;width:23px;height:16px;font-size:9.5px;align-items:center;">1</div>
<div class="rb" style="left:1272px;top:579px;width:22px;height:16px;font-size:9.5px;align-items:center;">7</div>
<div class="rb" style="left:1296px;top:579px;width:22px;height:16px;font-size:9.5px;align-items:center;">50</div>
<div class="rc" style="left:1325px;top:579px;width:78px;height:15px;line-height:13px;">轴向平移<svg width="9" height="6" style="position:absolute;right:6px;top:4.0px"><path d="M0.5 0.8 L4.5 4.8 L8.5 0.8" fill="none" stroke="#606060" stroke-width="1"/></svg></div>
<div class="t" style="left:1143px;top:580px;font-size:9.2px;color:#0000ff;letter-spacing:-0.3px">切面<span style="font-family:Liberation Serif;font-size:8px">Z</span></div>
<div class="rb" style="left:1174px;top:600px;width:23px;height:17px;font-size:9.5px;align-items:center;">−20</div>
<div class="rb" style="left:1198px;top:600px;width:23px;height:17px;font-size:9.5px;align-items:center;">−5</div>
<div class="rb" style="left:1223px;top:600px;width:22px;height:17px;font-size:9.5px;align-items:center;">−1</div>
<div class="rb" style="left:1247px;top:600px;width:23px;height:17px;font-size:9.5px;align-items:center;">1</div>
<div class="rb" style="left:1272px;top:600px;width:22px;height:17px;font-size:9.5px;align-items:center;">5</div>
<div class="rb" style="left:1296px;top:600px;width:22px;height:17px;font-size:9.5px;align-items:center;">20</div>
<div class="rc" style="left:1325px;top:600px;width:78px;height:16px;line-height:14px;">沿轴旋转<svg width="9" height="6" style="position:absolute;right:6px;top:4.5px"><path d="M0.5 0.8 L4.5 4.8 L8.5 0.8" fill="none" stroke="#606060" stroke-width="1"/></svg></div>
<div class="t" style="left:1143px;top:601px;font-size:9.2px;color:#ff0000;letter-spacing:-0.3px">切面<span style="font-family:Liberation Serif;font-size:8px">X</span></div>
<div class="rb" style="left:1174px;top:622px;width:23px;height:16px;font-size:9.5px;align-items:center;">−20</div>
<div class="rb" style="left:1198px;top:622px;width:23px;height:16px;font-size:9.5px;align-items:center;">−5</div>
<div class="rb" style="left:1223px;top:622px;width:22px;height:16px;font-size:9.5px;align-items:center;">−1</div>
<div class="rb" style="left:1247px;top:622px;width:23px;height:16px;font-size:9.5px;align-items:center;">1</div>
<div class="rb" style="left:1272px;top:622px;width:22px;height:16px;font-size:9.5px;align-items:center;">5</div>
<div class="rb" style="left:1296px;top:622px;width:22px;height:16px;font-size:9.5px;align-items:center;">20</div>
<div class="rc" style="left:1325px;top:622px;width:78px;height:15px;line-height:13px;">沿轴旋转<svg width="9" height="6" style="position:absolute;right:6px;top:4.0px"><path d="M0.5 0.8 L4.5 4.8 L8.5 0.8" fill="none" stroke="#606060" stroke-width="1"/></svg></div>
<div class="t" style="left:1143px;top:623px;font-size:9.2px;color:#008000;letter-spacing:-0.3px">切面<span style="font-family:Liberation Serif;font-size:8px">Y</span></div>
<div class="rb" style="left:1174px;top:643px;width:23px;height:17px;font-size:9.5px;align-items:center;">−20</div>
<div class="rb" style="left:1198px;top:643px;width:23px;height:17px;font-size:9.5px;align-items:center;">−5</div>
<div class="rb" style="left:1223px;top:643px;width:22px;height:17px;font-size:9.5px;align-items:center;">−1</div>
<div class="rb" style="left:1247px;top:643px;width:23px;height:17px;font-size:9.5px;align-items:center;">1</div>
<div class="rb" style="left:1272px;top:643px;width:22px;height:17px;font-size:9.5px;align-items:center;">5</div>
<div class="rb" style="left:1296px;top:643px;width:22px;height:17px;font-size:9.5px;align-items:center;">20</div>
<div class="rc" style="left:1325px;top:643px;width:78px;height:16px;line-height:14px;">沿轴旋转<svg width="9" height="6" style="position:absolute;right:6px;top:4.5px"><path d="M0.5 0.8 L4.5 4.8 L8.5 0.8" fill="none" stroke="#606060" stroke-width="1"/></svg></div>
<div class="t" style="left:1143px;top:644px;font-size:9.2px;color:#0000ff;letter-spacing:-0.3px">切面<span style="font-family:Liberation Serif;font-size:8px">Z</span></div>
<div class="a" style="left:1166px;top:666px;width:11px;height:11px;background:#fff;border:1px solid #333"></div>
<div class="t" style="left:1180px;top:666px;font-size:9.5px;">3D显示切面</div>
<div class="a" style="left:1235px;top:666px;width:11px;height:11px;background:#fff;border:1px solid #333"></div>
<div class="t" style="left:1249px;top:666px;font-size:9.5px;color:#ff0000">X切片</div>
<div class="a" style="left:1280px;top:666px;width:11px;height:11px;background:#fff;border:1px solid #333"></div>
<div class="t" style="left:1294px;top:666px;font-size:9.5px;color:#008000">Y切片</div>
<div class="a" style="left:1325px;top:666px;width:11px;height:11px;background:#fff;border:1px solid #333"></div>
<div class="t" style="left:1339px;top:666px;font-size:9.5px;color:#0000ff">Z切片</div>
<div class="rb" style="left:1133px;top:685px;width:49px;height:23px;font-size:10px;align-items:center;">整体显示</div>
<div class="rb" style="left:1192px;top:685px;width:68px;height:23px;font-size:10px;align-items:flex-start;padding-top:2px">保存切面X图</div>
<div class="rb" style="left:1271px;top:685px;width:68px;height:23px;font-size:10px;align-items:flex-start;padding-top:2px">保存切面Y图</div>
<div class="rb" style="left:1350px;top:685px;width:68px;height:23px;font-size:10px;align-items:flex-start;padding-top:2px">保存切面Z图</div>
<div class="a" style="left:1430px;top:99px;width:1px;height:685px;background:#fafafa"></div>
<div class="a" style="left:1431px;top:82px;width:1px;height:702px;background:#9aa0c0"></div>
<div class="a" style="left:1117px;top:783px;width:313px;height:1px;background:#d8d0d8"></div>
<!-- RIGHT PANEL END -->
<!-- right bottom tabs -->
<div class="t" style="left:482px;top:788px;font-size:10px;line-height:11px;color:#0c2a44">日志窗口</div>
<div class="a" style="left:526px;top:784px;width:47px;height:16px;background:#fff"></div>
<div class="t" style="left:529px;top:788px;font-size:10px;line-height:11px;color:#333">调试窗口</div>
</body></html>
